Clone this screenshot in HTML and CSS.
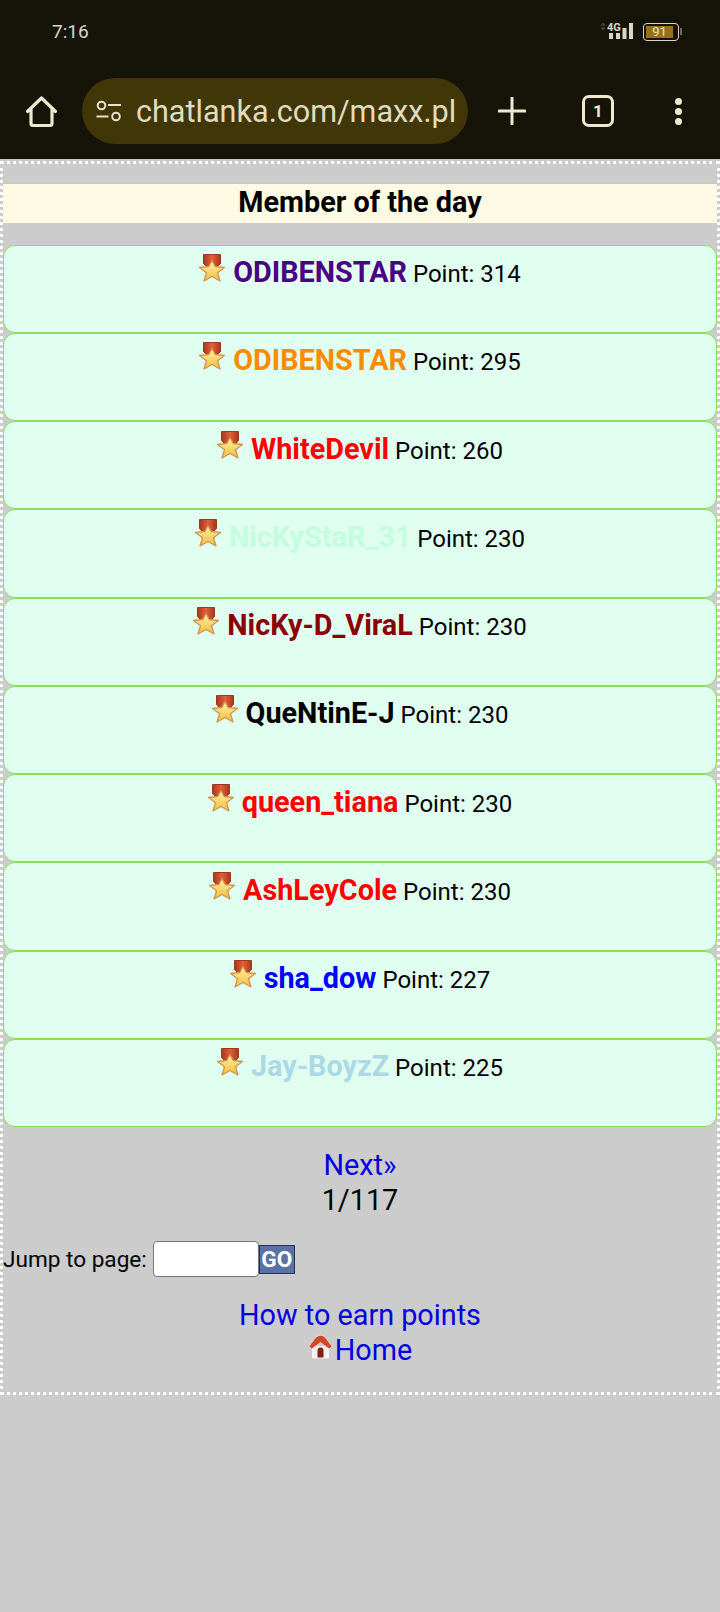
FILE: index.html
```html
<!DOCTYPE html>
<html>
<head>
    <meta charset="UTF-8">
    <title>Member of the day</title>
    <link rel="stylesheet" href="styles.css">
</head>
<body>
    <svg class="defs" width="0" height="0">
        <defs>
            <linearGradient id="starfill" x1="0" y1="0" x2="0" y2="1">
                <stop offset="0" stop-color="#fff2a8"/>
                <stop offset="1" stop-color="#f4bc3c"/>
            </linearGradient>
            <linearGradient id="ribbon" x1="0" y1="0" x2="1" y2="0">
                <stop offset="0" stop-color="#a8361c"/>
                <stop offset="0.5" stop-color="#e4603a"/>
                <stop offset="1" stop-color="#a8361c"/>
            </linearGradient>
            <symbol id="medal" viewBox="0 0 26 28">
                <path d="M4.500 0.500h17v9l-4 4h-9l-4-4z" fill="url(#ribbon)" stroke="#9c3a20"/>
                <path d="M13 6.500l3.200 6 9.300 1-7 5.200 2.500 8.300-8-4.500-8 4.500 2.500-8.300-7-5.200 9.300-1z" fill="url(#starfill)" stroke="#cf9650" stroke-width="1.300" stroke-linejoin="round"/>
            </symbol>
        </defs>
    </svg>

    <header class="chrome">
        <div class="status">
            <span class="time">7:16</span>
            <div class="status-right">
                <svg class="signal" width="38" height="20" viewBox="0 0 38 20">
                    <path d="M0.500 4.500l2.500-3 2.500 3zM0.500 6.500l2.500 3 2.500-3z" fill="#4c4a40"/>
                    <text x="7" y="10" class="net">4G</text>
                    <rect x="9" y="12" width="4" height="6" fill="#d8d6c8"/>
                    <rect x="16" y="12" width="4" height="6" fill="#d8d6c8"/>
                    <rect x="22.500" y="7" width="4" height="11" fill="#d8d6c8"/>
                    <rect x="29" y="2" width="4" height="16" fill="#d8d6c8"/>
                </svg>
                <div class="battery"><span class="level">91</span></div>
            </div>
        </div>
        <div class="toolbar">
            <svg class="icon-home" width="34" height="34" viewBox="0 0 34 34">
                <path d="M3.500 17.500L17.500 4l14 13.500M7 15v14.500a2 2 0 0 0 2 2h17a2 2 0 0 0 2-2V15" fill="none" stroke="#efe9d2" stroke-width="3.200" stroke-linejoin="round" stroke-linecap="round"/>
            </svg>
            <div class="urlbar">
                <svg width="27" height="22" viewBox="0 0 27 22">
                    <circle cx="5.500" cy="5.500" r="3.800" fill="none" stroke="#e6e2cc" stroke-width="2"/>
                    <path d="M12 5h13M0.500 16.500h12" stroke="#e6e2cc" stroke-width="2.200"/>
                    <circle cx="20" cy="16.500" r="3.800" fill="none" stroke="#e6e2cc" stroke-width="2"/>
                </svg>
                <span class="url">chatlanka.com/maxx.pl</span>
            </div>
            <svg class="icon-plus" width="28" height="28" viewBox="0 0 28 28">
                <path d="M14 1v26M1 14h26" stroke="#efe9d2" stroke-width="3" stroke-linecap="round"/>
            </svg>
            <div class="tabs">1</div>
            <div class="menu"><i></i><i></i><i></i></div>
        </div>
    </header>

    <main class="page">
        <h2 class="title">Member of the day</h2>
        <div class="list">
            <div class="row"><svg class="medal"><use href="#medal"/></svg> <b class="c-indigo">ODIBENSTAR</b> Point: 314</div>
            <div class="row"><svg class="medal"><use href="#medal"/></svg> <b class="c-orange">ODIBENSTAR</b> Point: 295</div>
            <div class="row"><svg class="medal"><use href="#medal"/></svg> <b class="c-red">WhiteDevil</b> Point: 260</div>
            <div class="row"><svg class="medal"><use href="#medal"/></svg> <b class="c-mint">NicKyStaR_31</b> Point: 230</div>
            <div class="row"><svg class="medal"><use href="#medal"/></svg> <b class="c-maroon">NicKy-D_ViraL</b> Point: 230</div>
            <div class="row"><svg class="medal"><use href="#medal"/></svg> <b>QueNtinE-J</b> Point: 230</div>
            <div class="row"><svg class="medal"><use href="#medal"/></svg> <b class="c-red">queen_tiana</b> Point: 230</div>
            <div class="row"><svg class="medal"><use href="#medal"/></svg> <b class="c-red">AshLeyCole</b> Point: 230</div>
            <div class="row"><svg class="medal"><use href="#medal"/></svg> <b class="c-blue">sha_dow</b> Point: 227</div>
            <div class="row"><svg class="medal"><use href="#medal"/></svg> <b class="c-sky">Jay-BoyzZ</b> Point: 225</div>
        </div>
        <div class="pager">
            <a href="#">Next»</a><br>
            1/117
        </div>
        <form class="jump">
            <label>Jump to page:</label>
            <input type="text" class="jump-input">
            <button type="button" class="go">GO</button>
        </form>
        <div class="links">
            <a href="#">How to earn points</a><br>
            <svg class="house" width="25" height="25" viewBox="0 0 25 25">
                <path d="M5 12v11.500h15V12" fill="#f6eee8" stroke="#fff" stroke-width="1.500"/>
                <path d="M9.500 23.500v-7a3 3 0 0 1 6 0v7z" fill="#7c2414"/>
                <path d="M0.800 12.500L8 3Q12.500 -0.500 17 3l7.200 9.500-3 2.500L12.500 8.500 3.800 15z" fill="#d04a28" stroke="#f3e4dc" stroke-width="0.800"/>
            </svg><a href="#">Home</a>
        </div>
    </main>
</body>
</html>
```

FILE: styles.css
```css
* {
    box-sizing: border-box;
}
body {
    margin: 0;
    background-color: #cccccc;
    font-family: Roboto, Arial, sans-serif;
    color: #000;
}
.defs {
    position: absolute;
}

/* browser bar */
.chrome {
    background-color: #161408;
    height: 159px;
    color: #e6e2cc;
}
.status {
    height: 62px;
    padding: 20px 41px 0 52px;
    display: flex;
    justify-content: space-between;
}
.time {
    font-size: 19px;
    line-height: 24px;
    color: #d8d6c8;
}
.status-right {
    display: flex;
    align-items: flex-start;
    gap: 5px;
    height: 24px;
}
.signal {
    margin-top: 1px;
}
.net {
    font-family: "Roboto";
    font-size: 11px;
    font-weight: 700;
    fill: #d8d6c8;
}
.battery {
    position: relative;
    width: 36px;
    height: 18px;
    margin-top: 3px;
    border: 1.500px solid #d8d6c8;
    border-radius: 4px;
    padding: 2px;
}
.battery:after {
    content: "";
    position: absolute;
    right: -4px;
    top: 4px;
    width: 2px;
    height: 7px;
    background-color: #6e6c60;
}
.level {
    display: block;
    width: 90%;
    height: 100%;
    background-color: #98701a;
    font-size: 13px;
    line-height: 11px;
    text-align: center;
    color: #e8e0c0;
}
.toolbar {
    height: 66px;
    margin-top: 16px;
    padding: 0 30px 0 24px;
    display: flex;
    align-items: center;
}
.urlbar {
    width: 386px;
    height: 66px;
    margin-left: 24px;
    padding: 0 10px 0 14px;
    background-color: #413608;
    border-radius: 33px;
    display: flex;
    align-items: center;
    gap: 13px;
}
.url {
    font-size: 30.600px;
    white-space: nowrap;
    color: #e0dcc0;
}
.icon-plus {
    margin-left: 30px;
}
.tabs {
    width: 32px;
    height: 32px;
    margin-left: 56px;
    border: 3px solid #efe9d2;
    border-radius: 7px;
    font-size: 17px;
    font-weight: 700;
    line-height: 26px;
    text-align: center;
    color: #efe9d2;
}
.menu {
    margin-left: 61px;
    display: flex;
    flex-direction: column;
    gap: 3px;
}
.menu i {
    width: 7px;
    height: 7px;
    border-radius: 50%;
    background-color: #efe9d2;
}

/* page */
.page {
    height: 1234px;
    margin-top: 2px;
    border: 3px dotted #ffffff;
    padding-top: 19px;
    text-align: center;
}
.title {
    margin: 0;
    height: 40px;
    background-color: #fffae3;
    border-top: 1px solid #e0cc70;
    font-size: 28.800px;
    font-weight: 700;
    line-height: 36px;
}
.list {
    margin-top: 21.500px;
}
.row {
    height: 88.250px;
    padding-top: 6.500px;
    background-color: #e0fff0;
    border: 1px solid #88e058;
    border-radius: 12px;
    font-size: 24px;
    line-height: 40px;
}
.row b {
    font-size: 28.800px;
    font-weight: 700;
}
.medal {
    width: 26px;
    height: 28px;
    vertical-align: 0;
    margin-right: 2px;
}
.c-indigo { color: #4b0082; }
.c-orange { color: #ff8c00; }
.c-red { color: #ff0000; }
.c-mint { color: #c4fce0; }
.c-maroon { color: #8b0000; }
.c-blue { color: #0000ff; }
.c-sky { color: #add8e6; }

a {
    color: #0000e0;
    text-decoration: none;
}
.pager {
    margin-top: 21px;
    font-size: 28.800px;
    line-height: 35px;
}
.jump {
    margin-top: 22px;
    display: flex;
    align-items: center;
    font-size: 22.600px;
    height: 38px;
}
.jump-input {
    width: 106px;
    height: 36px;
    margin-left: 6px;
    background-color: #fff;
    border: 1px solid #767676;
    border-radius: 4px;
}
.go {
    width: 36px;
    height: 29px;
    padding: 0;
    background-color: #5a72a4;
    border: 1px solid #22305a;
    color: #fff;
    font-family: Roboto, Arial, sans-serif;
    font-size: 22.600px;
    font-weight: 700;
}
.links {
    margin-top: 20px;
    font-size: 28.800px;
    line-height: 35px;
}
.house {
    vertical-align: 1px;
    margin-right: 2px;
}
```
